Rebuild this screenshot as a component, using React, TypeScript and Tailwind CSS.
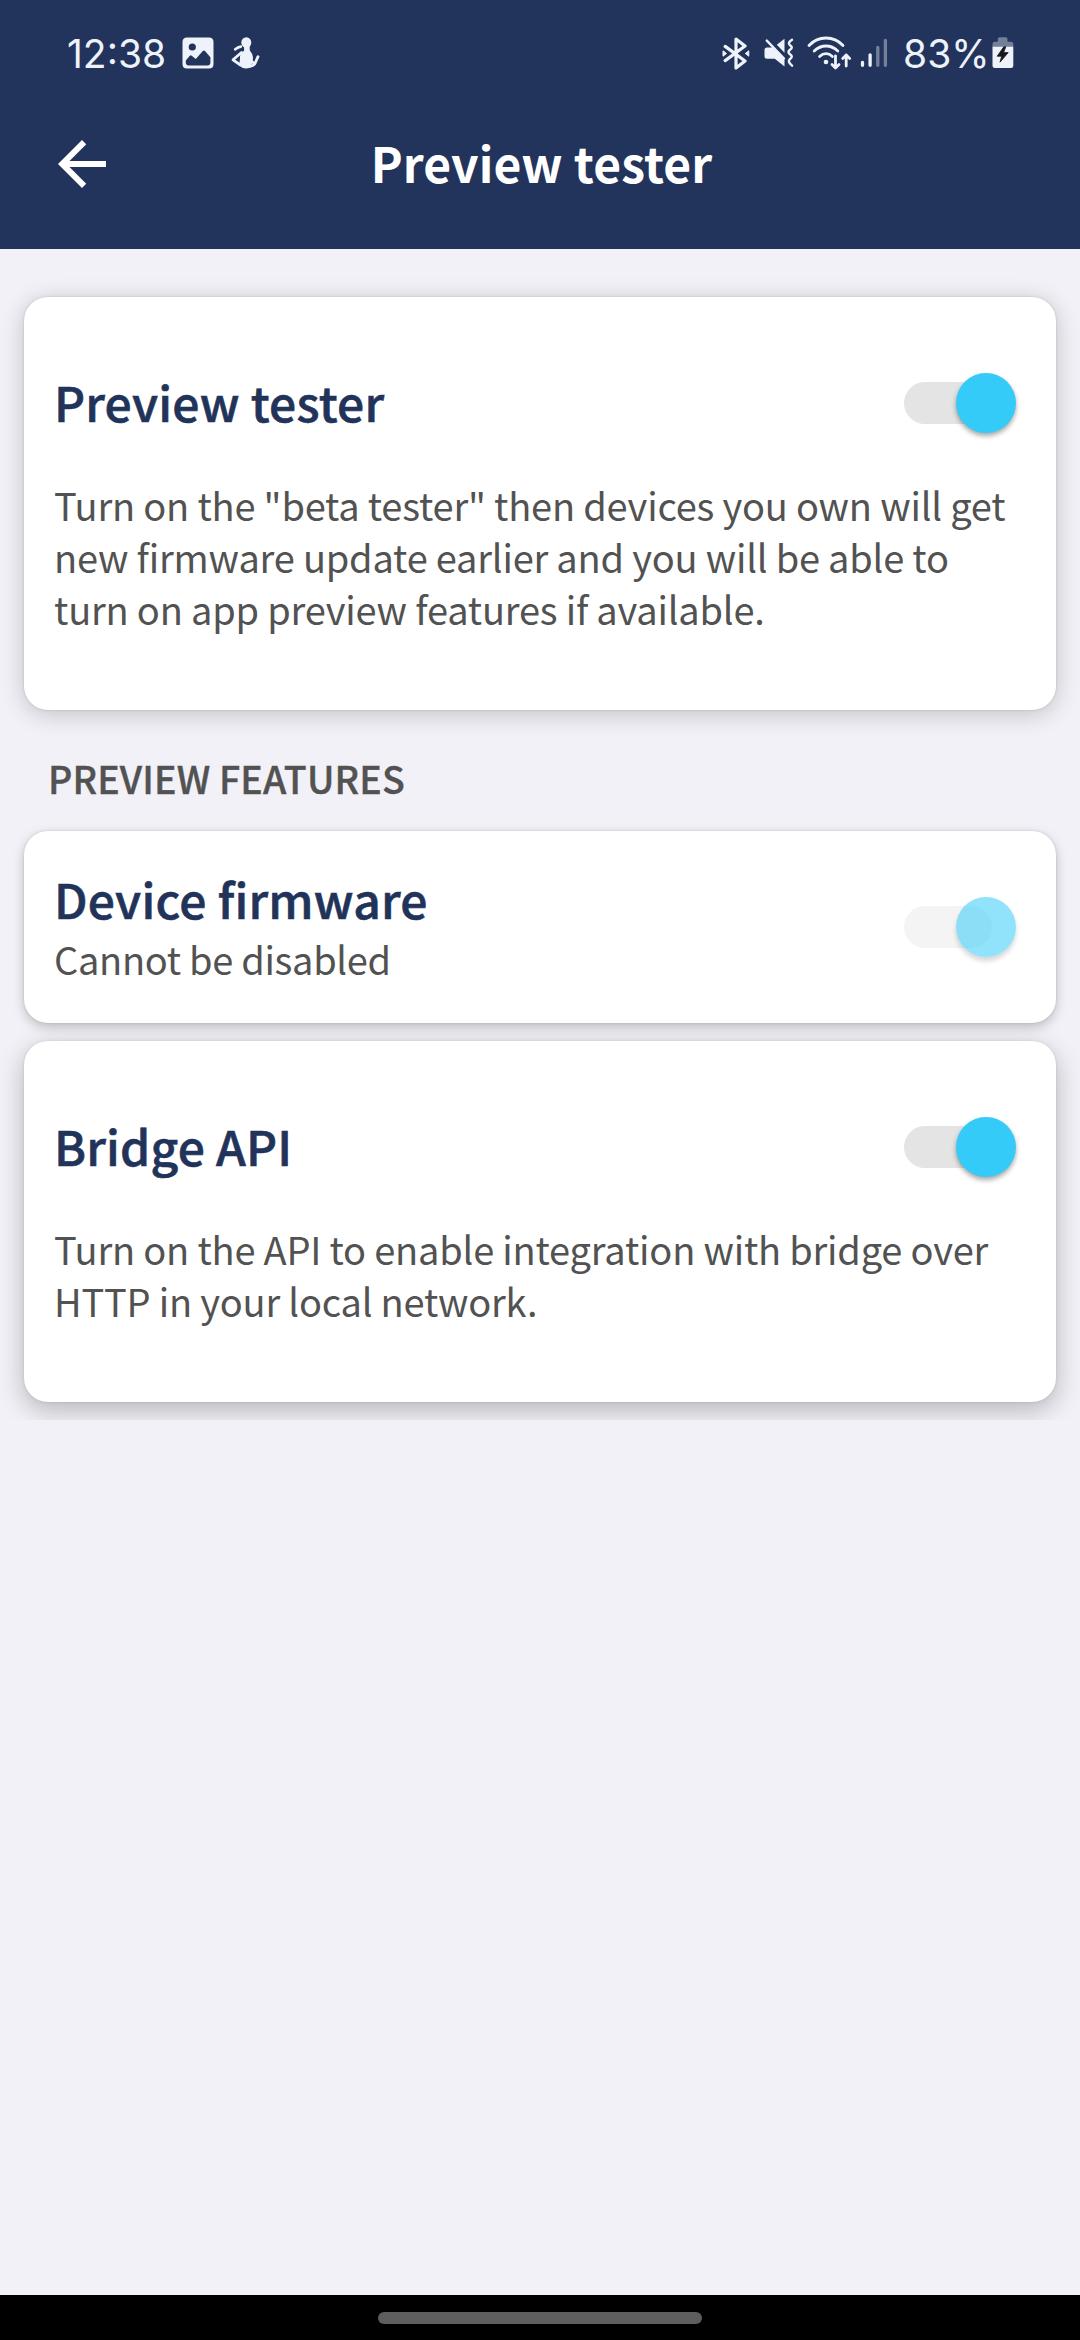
import type { ReactNode } from "react";

const INK = "#eef2fb";

function PictureIcon() {
  return (
    <svg width="32" height="32" viewBox="0 0 32 32" className="shrink-0">
      <path
        fillRule="evenodd"
        fill={INK}
        d="M5 0.5H27Q31.5 0.5 31.5 5V27Q31.5 31.5 27 31.5H5Q0.5 31.5 0.5 27V5Q0.5 0.5 5 0.5ZM10.3 6.4A3.6 3.6 0 1 0 10.3 13.6A3.6 3.6 0 1 0 10.3 6.4ZM3.8 23.5L7.6 18.9Q8.6 17.8 9.7 18.7L13.8 22L20.8 14Q21.9 12.9 23 14L28.4 20.2V25.6Q28.4 28.4 25.6 28.4H6.5Q3.8 28.4 3.8 25.6Z"
      />
    </svg>
  );
}

function FigureIcon() {
  return (
    <svg width="29" height="32" viewBox="0 0 29 32" className="shrink-0">
      <g fill={INK}>
        <ellipse cx="15.3" cy="5.5" rx="5" ry="5.3" />
        <path d="M12.8 8H18.6L18.8 13.5Q22 17 22 20.5Q22.2 26 20 29Q18.5 31.5 15.300 31.500Q10.500 31.500 9 28.500Q8.300 25 9 21Q8.400 17 13.200 13.500Z" />
      </g>
      <g fill="none" stroke={INK} strokeWidth="2.800" strokeLinecap="round" strokeLinejoin="round">
        <path d="M9.800 9.600Q7 10 4.300 12.300" />
        <path d="M10.500 15.500L2 22.800L9.500 28" />
        <path d="M19 29.500Q24.500 28 24.600 25L27 19.700" />
        <path d="M23.500 26.800L21 24.500" />
      </g>
    </svg>
  );
}

function BluetoothIcon() {
  return (
    <svg width="28" height="33" viewBox="0 0 28 33" className="shrink-0">
      <path
        d="M3.200 9.400L23 24L14 31V2L23 9L3.200 23.600"
        fill="none"
        stroke={INK}
        strokeWidth="3.200"
        strokeLinejoin="round"
        strokeLinecap="round"
      />
      <path d="M1 13.800L4.500 16.500L1 19.200ZM26.800 13.800L23.300 16.500L26.800 19.200Z" fill={INK} stroke={INK} strokeLinejoin="round" />
    </svg>
  );
}

function VibrateMuteIcon() {
  return (
    <svg width="30" height="30" viewBox="0 0 30 30" className="shrink-0">
      <path d="M3 9.500H9.200L20.500 21.500V28.500L10.800 20.800H3Q0.500 20.800 0.500 18.300V12Q0.500 9.500 3 9.500Z" fill={INK} />
      <path d="M12.800 6.800L20.500 0.800V14.800Z" fill={INK} />
      <path d="M2.800 2.600L20 20.500" stroke={INK} strokeWidth="2.400" strokeLinecap="round" />
      <path
        d="M28 1.800Q23 5 26 7.200Q29.500 9.500 26 11.800Q23 14.200 26 16.200Q29.500 18.500 26 21Q23 23.500 28 27.600"
        fill="none"
        stroke={INK}
        strokeWidth="2.500"
        strokeLinecap="round"
        strokeLinejoin="round"
      />
    </svg>
  );
}

function WifiIcon() {
  return (
    <svg width="45" height="34" viewBox="0 0 45 34" className="shrink-0">
      <g fill="none" stroke={INK} strokeWidth="2.800" strokeLinecap="round" strokeLinejoin="round">
        <path d="M2 9.500Q9 2 19 2Q29 2 36 9.500" />
        <path d="M7.200 15Q12.500 10 19 10Q25.500 10 30.800 15" />
        <path d="M12.600 20.500Q15.500 17.700 19 17.700Q22.500 17.700 25.400 20.500" />
        <path d="M28.500 20V31.800M25 28.500L28.500 32L32 28.500" />
        <path d="M39.200 30V19M35.700 22.500L39.200 19L42.700 22.500" />
      </g>
      <circle cx="19" cy="26" r="2.300" fill={INK} />
    </svg>
  );
}

function SignalIcon() {
  return (
    <svg width="28" height="30" viewBox="0 0 28 30" className="shrink-0">
      <g stroke={INK} strokeWidth="3.300" strokeLinecap="round">
        <path d="M2.500 24.500V27.300M10.100 16.800V27.300" />
        <path d="M17.800 9.300V27.300M25.400 2.300V27.300" opacity="0.400" />
      </g>
    </svg>
  );
}

function BatteryIcon() {
  return (
    <svg width="22" height="32" viewBox="0 0 22 32" className="shrink-0">
      <path d="M0.500 10V7Q0.500 4.800 2.800 4.800H5.800V2Q5.800 0.300 7.500 0.300H13.800Q15.500 0.300 15.500 2V4.800H19Q21.300 4.800 21.300 7V10Z" fill={INK} opacity="0.400" />
      <path d="M0.500 9.800H21.300V28.500Q21.300 31 18.800 31H3Q0.500 31 0.500 28.500Z" fill={INK} />
      <path d="M11.800 9.800L5.200 19.200H9.700L8 25.200L16.200 15.600H11.600L13.800 9.800Z" fill="#15171c" stroke="#15171c" strokeWidth="0.800" strokeLinejoin="round" />
    </svg>
  );
}

function BackArrow() {
  return (
    <svg width="72" height="72" viewBox="0 0 24 24" fill="#fff" className="shrink-0">
      <path d="M20 11H7.830l5.590-5.590L12 4l-8 8 8 8 1.410-1.410L7.830 13H20v-2z" />
    </svg>
  );
}

function Toggle({ disabled = false }: { disabled?: boolean }) {
  return (
    <div className="relative h-[60px] w-[112px] shrink-0">
      <div className={`absolute left-0 top-[9px] h-[42px] w-[88px] rounded-full ${disabled ? "bg-[#f4f4f4]" : "bg-[#e4e4e4]"}`} />
      <div
        className={`absolute right-0 top-0 size-[60px] rounded-full ${
          disabled
            ? "bg-[#34cbf9]/54 shadow-[0_4px_5px_rgba(0,0,0,0.16)]"
            : "bg-[#34cbf9] shadow-[0_3px_5px_rgba(0,0,0,0.35)]"
        }`}
      />
    </div>
  );
}

function CardTitle({ children }: { children: ReactNode }) {
  return (
    <h2 className="text-[48px] leading-[60px] font-medium tracking-[0.2px] text-[#22335a] [-webkit-text-stroke:0.6px_#22335a]">
      {children}
    </h2>
  );
}

function FeatureCard({ title, className, children }: { title: string; className: string; children: ReactNode }) {
  return (
    <section className={`rounded-[24px] bg-white pl-[30px] pr-10 pt-[76px] ${className}`}>
      <div className="flex h-[60px] items-center justify-between">
        <div className="pb-[5px]">
          <CardTitle>{title}</CardTitle>
        </div>
        <Toggle />
      </div>
      <p className="mt-[46px] text-[38px] leading-[52px] tracking-[-0.2px] whitespace-nowrap text-[#525252]">{children}</p>
    </section>
  );
}

export default function App() {
  return (
    <div className="flex h-[2340px] w-[1080px] flex-col overflow-hidden bg-[#f2f1f7] font-['Noto_Sans_CJK_SC',sans-serif]">
      <header className="h-[249px] shrink-0 bg-[#22345b]">
        <div className="flex h-[106px] items-center pl-[67px] pr-[66px] font-['Inter',sans-serif] text-[39px] leading-none text-[#eef2fb]">
          <span className="w-[98px] whitespace-nowrap">12:38</span>
          <div className="ml-[17px] flex items-center gap-[17px]">
            <PictureIcon />
            <FigureIcon />
          </div>
          <div className="ml-auto flex items-center">
            <BluetoothIcon />
            <span className="ml-[14px] flex"><VibrateMuteIcon /></span>
            <span className="ml-[13px] flex"><WifiIcon /></span>
            <span className="ml-2 flex"><SignalIcon /></span>
            <span className="ml-[15px] w-[84px] whitespace-nowrap">83%</span>
            <span className="ml-[5px] flex"><BatteryIcon /></span>
          </div>
        </div>
        <div className="grid h-[116px] grid-cols-[72px_1fr_72px] items-center px-[46px]">
          <BackArrow />
          <h1 className="pb-[4px] pl-[3px] text-center text-[48px] leading-[60px] font-bold tracking-[0.1px] text-white">Preview tester</h1>
        </div>
      </header>

      <main className="flex flex-1 flex-col px-6 pt-12">
        <FeatureCard title="Preview tester" className="h-[413px] shadow-[0_4px_24px_rgba(0,0,0,0.2),0_0_3px_rgba(0,0,0,0.15)]">
          Turn on the "beta tester" then devices you own will get
          <br />
          new firmware update earlier and you will be able to
          <br />
          turn on app preview features if available.
        </FeatureCard>

        <h3 className="mt-[38px] mb-[23px] pl-6 text-[37.5px] leading-[60px] font-medium tracking-[0.15px] text-[#525252] [-webkit-text-stroke:0.4px_#525252]">
          PREVIEW FEATURES
        </h3>

        <section className="flex h-[192px] items-center justify-between rounded-[24px] bg-white pl-[30px] pr-10 shadow-[0_4px_12px_rgba(0,0,0,0.22),0_0_3px_rgba(0,0,0,0.12)]">
          <div>
            <CardTitle>Device firmware</CardTitle>
            <p className="pt-[3px] text-[38px] leading-[56px] tracking-[-0.3px] text-[#525252]">Cannot be disabled</p>
          </div>
          <Toggle disabled />
        </section>

        <div className="-mx-6 overflow-hidden px-6 pt-[18px] pb-[18px]">
          <FeatureCard title="Bridge API" className="h-[361px] shadow-[0_8px_26px_rgba(0,0,0,0.25),0_0_3px_rgba(0,0,0,0.12)]">
            Turn on the API to enable integration with bridge over
            <br />
            HTTP in your local network.
          </FeatureCard>
        </div>
      </main>

      <footer className="flex h-[45px] shrink-0 justify-center bg-black pt-[17px]">
        <div className="h-3 w-[324px] rounded-full bg-[#5e5e5e]" />
      </footer>
    </div>
  );
}
